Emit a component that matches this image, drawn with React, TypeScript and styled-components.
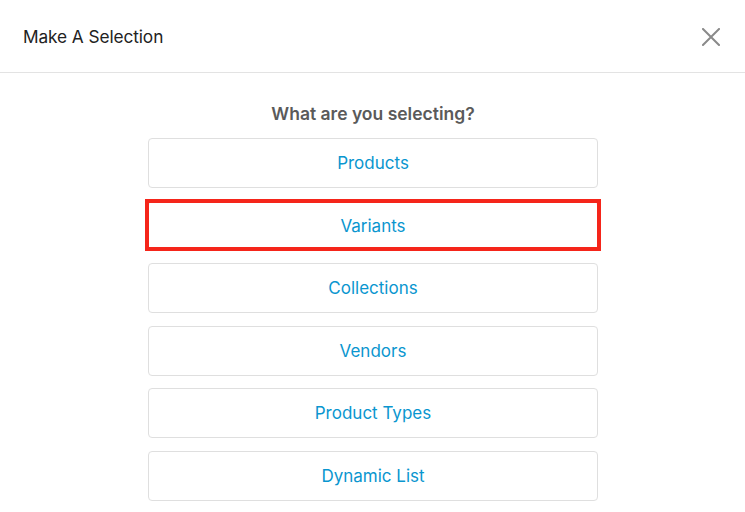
import React from "react";
import styled, { createGlobalStyle } from "styled-components";

const options = [
	"Products",
	"Variants",
	"Collections",
	"Vendors",
	"Product Types",
	"Dynamic List",
];

const App = () => {
	return (
		<>
			<GlobalStyle />
			<Modal>
				<Header>
					<Title>Make A Selection</Title>
					<CloseButton aria-label="Close">
						<svg width="18" height="18" viewBox="0 0 18 18">
							<path d="M1 1L17 17M17 1L1 17" stroke="#8a8a8a" strokeWidth="2" strokeLinecap="square" />
						</svg>
					</CloseButton>
				</Header>
				<Body>
					<Question>What are you selecting?</Question>
					<OptionList>
						{options.map((label) => (
							<OptionButton key={label} $highlighted={label === "Variants"}>
								{label}
							</OptionButton>
						))}
					</OptionList>
				</Body>
			</Modal>
		</>
	);
};

export default App;

const GlobalStyle = createGlobalStyle`
	html, body {
		margin: 0;
		padding: 0;
		background: #ffffff;
	}
	body {
		font-family: Inter, "Liberation Sans", sans-serif;
		-webkit-font-smoothing: antialiased;
	}
`;

const Modal = styled.div`
	display: flex;
	flex-direction: column;
	width: 745px;
	height: 512px;
	background: #ffffff;
	overflow: hidden;
`;

const Header = styled.div`
	display: flex;
	align-items: center;
	justify-content: space-between;
	height: 73px;
	padding: 0 25px 0 23px;
	border-bottom: 1px solid #e3e3e3;
	box-sizing: border-box;
`;

const Title = styled.h1`
	margin: 0;
	font-size: 17.3px;
	font-weight: 400;
	color: #222222;
	letter-spacing: -0.1px;
`;

const CloseButton = styled.button`
	display: flex;
	align-items: center;
	justify-content: center;
	padding: 0;
	margin-top: 1px;
	border: none;
	background: none;
	cursor: pointer;
`;

const Body = styled.div`
	display: flex;
	flex-direction: column;
	align-items: center;
	padding-top: 29px;
	padding-left: 1px;
`;

const Question = styled.h2`
	margin: 0 0 12px;
	font-size: 17.5px;
	font-weight: 600;
	color: #5a5a5a;
	line-height: 24px;
`;

const OptionList = styled.div`
	display: flex;
	flex-direction: column;
	gap: 12.5px;
	width: 450px;
`;

const OptionButton = styled.button<{ $highlighted?: boolean }>`
	position: relative;
	height: 50px;
	border: 1px solid #dfdfdf;
	border-radius: 4px;
	background: #ffffff;
	color: #0a96cf;
	font-family: Inter, "Liberation Sans", sans-serif;
	font-size: 17px;
	cursor: pointer;

	&::after {
		content: "";
		display: ${(p) => (p.$highlighted ? "block" : "none")};
		position: absolute;
		left: -4px;
		right: -4px;
		top: -2.5px;
		bottom: -1.5px;
		border: 4px solid #f5251a;
		pointer-events: none;
	}
`;
